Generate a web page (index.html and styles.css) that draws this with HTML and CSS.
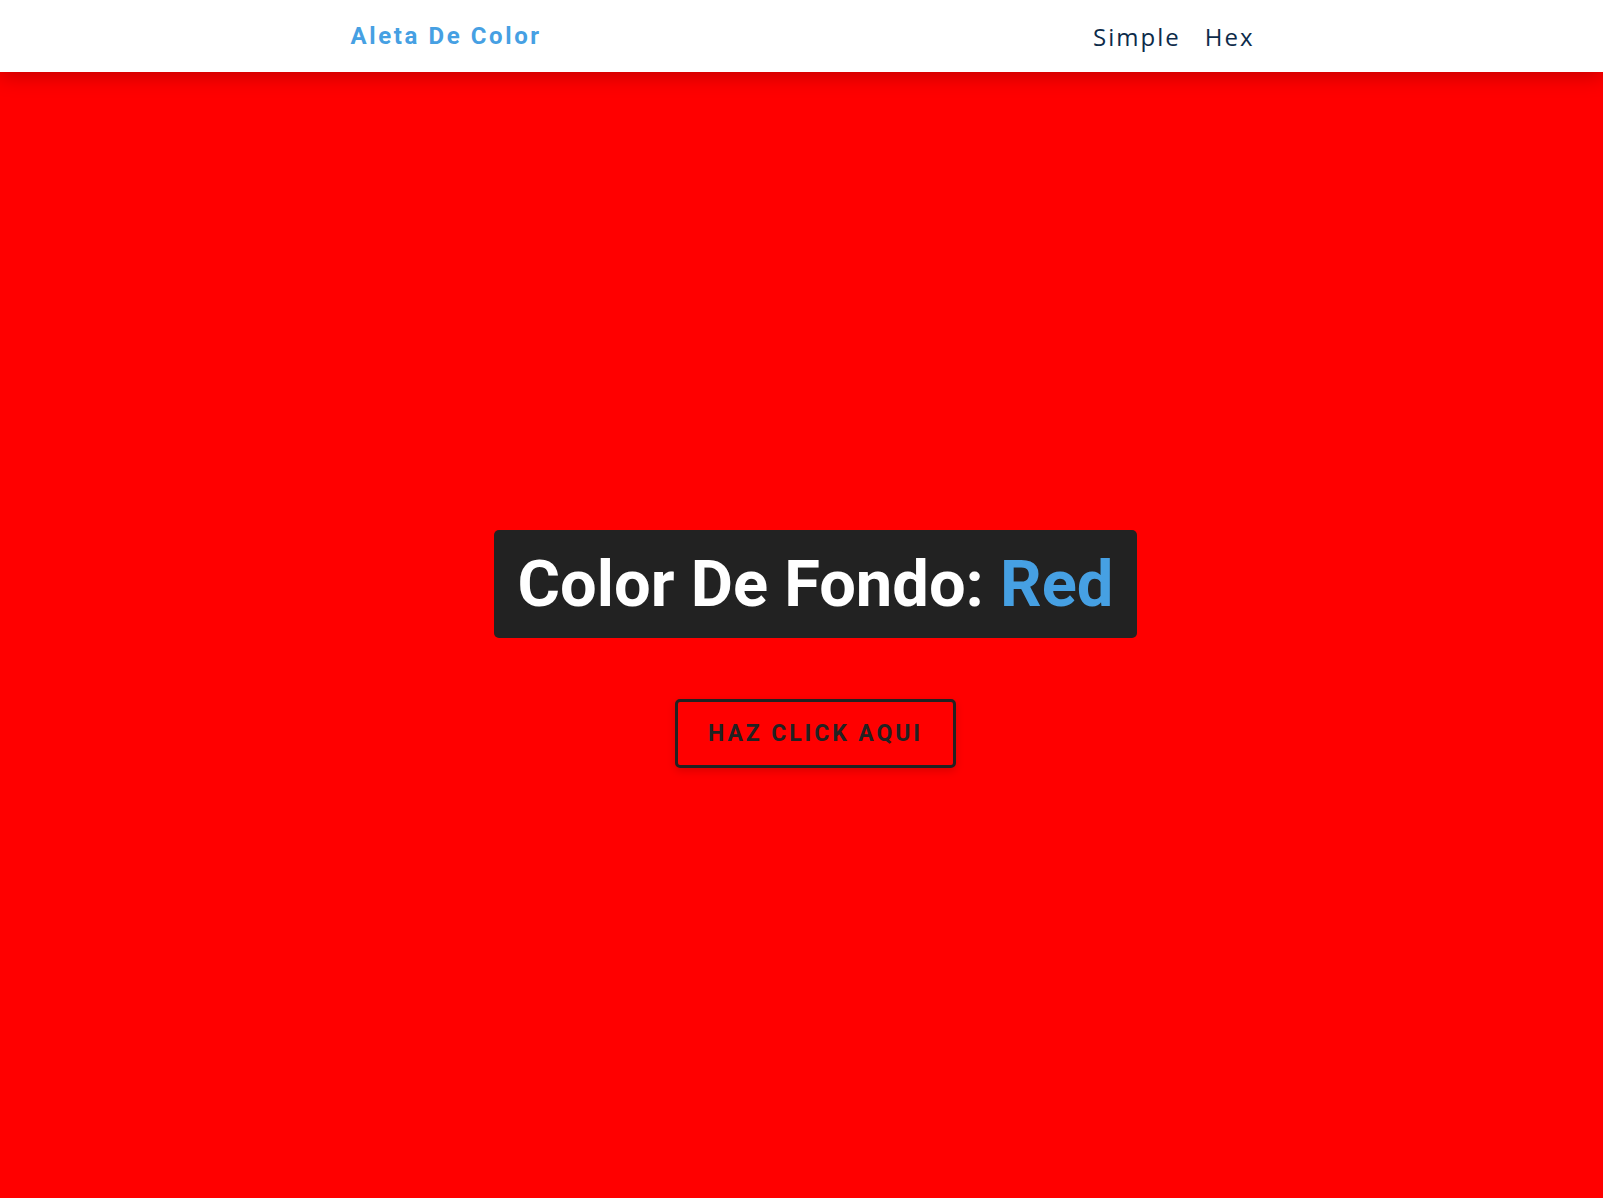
FILE: index.html
```html
<!DOCTYPE html>
<html lang="es">
<head>
<meta charset="utf-8">
<title>Aleta De Color</title>
<link rel="stylesheet" href="styles.css">
</head>
<body>
<nav class="nav">
  <div class="nav-inner">
    <a class="brand" href="#">Aleta De Color</a>
    <ul class="links">
      <li><a href="#">Simple</a></li>
      <li><a href="#">Hex</a></li>
    </ul>
  </div>
</nav>
<main class="main">
  <div class="content">
    <h2 class="title">Color De Fondo: <span class="color">Red</span></h2>
    <button class="btn">Haz click aqui</button>
  </div>
</main>
</body>
</html>
```
FILE: styles.css
```css
* { box-sizing: border-box; }
html, body { margin: 0; padding: 0; height: 100%; }
body {
  font-family: Roboto, "Liberation Sans", sans-serif;
  background: #ff0000;
  display: flex;
  flex-direction: column;
}
.nav {
  height: 72px;
  background: #fff;
  box-shadow: 0 3px 20px rgba(0, 0, 0, 0.25);
  position: relative;
  z-index: 1;
  flex: none;
}
.nav-inner {
  width: 906px;
  margin: 0 auto;
  height: 100%;
  display: flex;
  align-items: center;
  justify-content: space-between;
  padding: 0 0 0 2px;
}
.brand {
  font-weight: 700;
  font-size: 24px;
  letter-spacing: 2.6px;
  color: #46a0e3;
  text-decoration: none;
}
.links {
  list-style: none;
  margin: 0;
  padding: 0;
  display: flex;
  gap: 24px;
}
.links a {
  font-family: "Open Sans", sans-serif;
  font-size: 24px;
  letter-spacing: 2px;
  color: #0d2b4a;
  text-decoration: none;
}
.main {
  flex: 1;
  display: flex;
  align-items: center;
  justify-content: center;
  padding: 28px 0 0 28px;
}
.content {
  display: flex;
  flex-direction: column;
  align-items: center;
}
.title {
  margin: 0;
  background: #222222;
  color: #fff;
  border-radius: 5px;
  padding: 12px 24px;
  font-size: 65px;
  font-weight: 700;
  line-height: 84px;
}
.color { color: #46a0e3; }
.btn {
  margin-top: 61px;
  background: transparent;
  border: 3px solid #222;
  border-radius: 5px;
  width: 281px;
  height: 69px;
  font-family: Roboto, sans-serif;
  font-weight: 700;
  font-size: 23px;
  letter-spacing: 2.9px;
  text-transform: uppercase;
  color: #222;
  box-shadow: 0 3px 8px rgba(0,0,0,0.15);
}
```
